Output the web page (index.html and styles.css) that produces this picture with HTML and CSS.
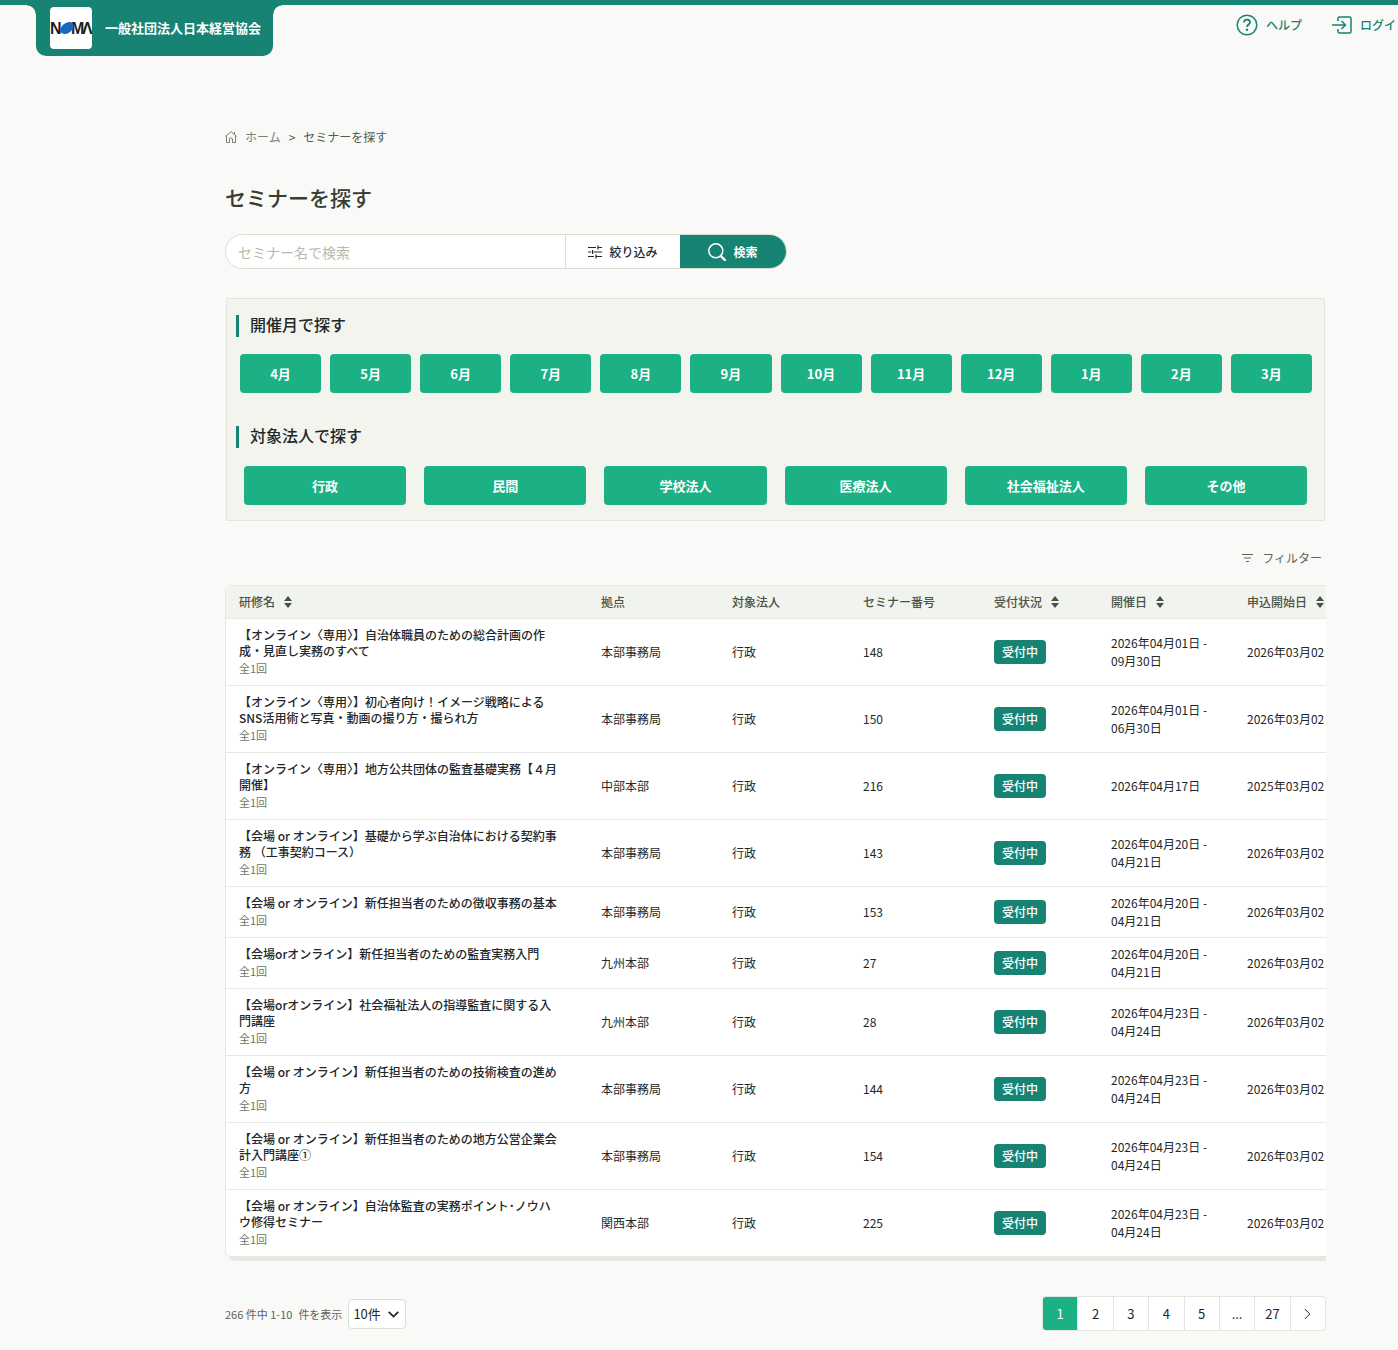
FILE: index.html
```html
<!DOCTYPE html>
<html lang="ja">
<head>
  <meta charset="UTF-8">
  <meta name="viewport" content="width=device-width, initial-scale=1.0">
  <title>セミナーを探す | 一般社団法人日本経営協会</title>
  <link rel="stylesheet" href="styles.css">
</head>
<body>
  <header class="site-header">
    <a class="brand" href="#">
      <svg class="brand-logo" viewBox="0 0 42 42" aria-hidden="true">
        <rect width="42" height="42" rx="4" fill="#fff"/>
        <g class="logo-text" fill="#1d1d1f">
          <text x="0" y="27">N</text>
          <text x="21" y="27">M</text>
          <text x="32" y="27">Λ</text>
        </g>
        <ellipse cx="17" cy="21" rx="7.500" ry="5" transform="rotate(-38 17 21)" fill="#1767c0"/>
      </svg>
      <span>一般社団法人日本経営協会</span>
    </a>
    <nav class="header-nav">
      <a href="#">
        <svg width="22" height="22" viewBox="0 0 22 22" fill="none" stroke="currentColor" stroke-width="1.500">
          <circle cx="11" cy="11" r="9.800"/>
          <path d="M8 8.600C8 6.700 9.300 5.600 11 5.600s3 1.100 3 2.700c0 2.200-3 2.300-3 4.700" stroke-width="1.800"/>
          <circle cx="11" cy="15.800" r="1.200" fill="currentColor" stroke="none"/>
        </svg>
        ヘルプ
      </a>
      <a href="#">
        <svg width="20" height="18" viewBox="0 0 20 18" fill="none" stroke="currentColor" stroke-width="1.500">
          <path d="M6 5V2.500Q6 1 7.500 1h10Q19 1 19 2.500v13q0 1.500-1.500 1.500h-10Q6 17 6 15.500V13"/>
          <path d="M0 9h13M9.500 5l4 4-4 4"/>
        </svg>
        ログイン
      </a>
    </nav>
  </header>

  <main class="content">
    <nav class="breadcrumb">
      <a href="#">
        <svg width="12" height="12" viewBox="0 0 12 12" fill="none" stroke="currentColor">
          <path d="M1.500 4.500V11.500h3V8q0-1 1.500-1t1.500 1v3.500h3V4.500M.5 5.300L6 .7l5.500 4.600M9.500 3.500V1"/>
        </svg>
        ホーム
      </a>
      <span>&gt;</span>
      <span>セミナーを探す</span>
    </nav>

    <h1>セミナーを探す</h1>

    <form class="search" onsubmit="return false">
      <input type="text" placeholder="セミナー名で検索" aria-label="セミナー名で検索">
      <button type="button" class="search-narrow">
        <svg width="14" height="14" viewBox="0 0 14 14" fill="none" stroke="currentColor" stroke-width="1.200">
          <path d="M0 2.500h8M10 2.500h4M10 .5v4M0 7h3M5.500 7H14M4.500 5v4M0 11.500h6M8.500 11.500H14M8 9.500v4"/>
        </svg>
        絞り込み
      </button>
      <button type="submit" class="search-submit">
        <svg width="18" height="18" viewBox="0 0 18 18" fill="none" stroke="currentColor">
          <circle cx="7.800" cy="7.800" r="7" stroke-width="1.500"/>
          <path d="M12.800 13l4.200 4.200" stroke-width="2.400" stroke-linecap="round"/>
        </svg>
        検索
      </button>
    </form>

    <section class="finder">
      <h2>開催月で探す</h2>
      <div class="months">
        <button type="button">4月</button>
        <button type="button">5月</button>
        <button type="button">6月</button>
        <button type="button">7月</button>
        <button type="button">8月</button>
        <button type="button">9月</button>
        <button type="button">10月</button>
        <button type="button">11月</button>
        <button type="button">12月</button>
        <button type="button">1月</button>
        <button type="button">2月</button>
        <button type="button">3月</button>
      </div>
      <h2>対象法人で探す</h2>
      <div class="targets">
        <button type="button">行政</button>
        <button type="button">民間</button>
        <button type="button">学校法人</button>
        <button type="button">医療法人</button>
        <button type="button">社会福祉法人</button>
        <button type="button">その他</button>
      </div>
    </section>

    <div class="toolbar">
      <button type="button">
        <svg width="11" height="8" viewBox="0 0 11 8" fill="none" stroke="currentColor">
          <path d="M0 .5h11M2 4h7M4 7.500h3"/>
        </svg>
        フィルター
      </button>
    </div>

    <div class="table-wrap">
      <table class="seminars">
        <colgroup>
          <col class="col-name">
          <col class="col-base">
          <col class="col-base">
          <col class="col-base">
          <col class="col-status">
          <col class="col-date">
          <col class="col-open">
        </colgroup>
        <thead>
          <tr>
            <th><button type="button" class="sort">研修名</button></th>
            <th>拠点</th>
            <th>対象法人</th>
            <th>セミナー番号</th>
            <th><button type="button" class="sort">受付状況</button></th>
            <th><button type="button" class="sort">開催日</button></th>
            <th><button type="button" class="sort">申込開始日</button></th>
          </tr>
        </thead>
        <tbody id="seminarList"></tbody>
      </table>
    </div>

    <div class="list-footer">
      <div class="count">
        <span>266 件中 1-10</span>
        <label for="perPage">件を表示</label>
        <span class="select-box">
          <select id="perPage">
            <option>10件</option>
            <option>20件</option>
            <option>50件</option>
          </select>
          <svg width="11" height="7" viewBox="0 0 11 7" fill="none" stroke="currentColor" stroke-width="1.800">
            <path d="M.7 .8l4.800 4.800L10.300 .8"/>
          </svg>
        </span>
      </div>
      <nav class="pager" aria-label="ページ">
        <a class="current" href="#">1</a>
        <a href="#">2</a>
        <a href="#">3</a>
        <a href="#">4</a>
        <a href="#">5</a>
        <span>...</span>
        <a href="#">27</a>
        <a href="#" aria-label="次へ">
          <svg width="7" height="12" viewBox="0 0 7 12" fill="none" stroke="currentColor">
            <path d="M.8 1l5 5-5 5"/>
          </svg>
        </a>
      </nav>
    </div>
  </main>

  <script src="script.js"></script>
</body>
</html>
```

FILE: styles.css
```css
* {
  box-sizing: border-box;
}
body {
  margin: 0;
  background: #f9f9f7;
  color: #22282a;
  font-family: "Noto Sans CJK JP", "Noto Sans", sans-serif;
  font-size: 12px;
  line-height: 18px;
  overflow-x: hidden;
}
a {
  color: inherit;
  text-decoration: none;
}
button, input, select {
  font: inherit;
  color: inherit;
  margin: 0;
  padding: 0;
  border: none;
  background: none;
}
button {
  cursor: pointer;
}
svg {
  flex: none;
}

/* header */
.site-header {
  display: flex;
  align-items: flex-start;
  justify-content: space-between;
  height: 56px;
  padding-left: 36px;
  border-top: 5px solid #178373;
  overflow: hidden;
}
.brand {
  position: relative;
  display: flex;
  align-items: center;
  gap: 13px;
  height: 51px;
  padding: 0 12px 6px 14px;
  border-radius: 0 0 10px 10px;
  background: #178373;
  color: #fff;
  font-size: 13px;
  font-weight: 700;
}
/* inverted corners where the tab meets the top bar */
.brand::before,
.brand::after {
  content: "";
  position: absolute;
  top: 0;
  width: 9px;
  height: 9px;
}
.brand::before {
  right: 100%;
  background: radial-gradient(circle at 0 100%, transparent 8px, #178373 9px);
}
.brand::after {
  left: 100%;
  background: radial-gradient(circle at 100% 100%, transparent 8px, #178373 9px);
}
.brand-logo {
  width: 42px;
  height: 42px;
}
.logo-text {
  font: bold 16px "Liberation Sans", sans-serif;
}
.header-nav {
  display: flex;
  gap: 30px;
  margin-right: -10px;
  padding-top: 9px;
  color: #178373;
  font-weight: 500;
  white-space: nowrap;
}
.header-nav a {
  display: flex;
  align-items: center;
  gap: 8px;
  height: 22px;
}

/* content */
.content {
  padding: 72px 72px 20px 225px;
}
.breadcrumb {
  display: flex;
  align-items: center;
  gap: 8px;
  color: #555b50;
}
.breadcrumb a {
  display: flex;
  align-items: center;
  gap: 8px;
  color: #7a8075;
}
h1 {
  margin: 35px 0 21px;
  color: #383d35;
  font-size: 21px;
  font-weight: 500;
  line-height: 32px;
}

/* search */
.search {
  display: flex;
  width: 562px;
  height: 35px;
  border: 1px solid #dadfd4;
  border-radius: 18px;
  background: #fff;
  overflow: hidden;
}
.search input {
  flex: 1;
  min-width: 0;
  padding: 0 12px;
  font-size: 14px;
}
.search input::placeholder {
  color: #b4bbae;
  opacity: 1;
}
.search button {
  display: flex;
  align-items: center;
  justify-content: center;
  gap: 7px;
  font-weight: 500;
}
.search-narrow {
  width: 115px;
  border-left: 1px solid #dadfd4;
}
.search .search-submit {
  width: 106px;
  background: #178373;
  color: #fff;
  font-weight: 700;
}

/* month / target buttons */
.finder {
  margin: 29px 1px 0;
  padding: 16px 9px 15px;
  border: 1px solid #e3e5df;
  background: #f3f4ee;
}
.finder h2 {
  margin: 0;
  padding: 0 0 4px 11px;
  border-left: 3px solid #178373;
  font-size: 16px;
  font-weight: 500;
  line-height: 18px;
}
.months,
.targets {
  display: grid;
}
.months {
  grid-template-columns: repeat(12, 1fr);
  gap: 9px;
  margin: 17px 3px 33px 4px;
}
.targets {
  grid-template-columns: repeat(6, 1fr);
  gap: 18px;
  margin: 18px 8px 0;
}
.finder button {
  height: 39px;
  border-radius: 4px;
  background: #1bb184;
  color: #fff;
  font-size: 13px;
  font-weight: 700;
}

.toolbar {
  display: flex;
  justify-content: flex-end;
  margin: 28px 4px 18px;
}
.toolbar button {
  display: flex;
  align-items: center;
  gap: 9px;
  color: #5e6459;
}

/* seminar table */
.table-wrap {
  padding-bottom: 5px;
  overflow: hidden;
}
.seminars {
  table-layout: fixed;
  width: 1280px;
  border: 1px solid #e6e9e2;
  border-radius: 6px;
  border-spacing: 0;
  background: #fff;
  box-shadow: 4px 4px 0 #e6e9e2;
}
.col-name { width: 362px; }
.col-base { width: 131px; }
.col-status { width: 117px; }
.col-date { width: 136px; }
.seminars th,
.seminars td {
  padding: 8px 0 8px 13px;
  border-bottom: 1px solid #e6e8e6;
  text-align: left;
}
.seminars th {
  padding: 7px 0 7px 13px;
  background: #f0f3ee;
  color: #4b5245;
  font-weight: 500;
}
.seminars th:first-child {
  border-top-left-radius: 5px;
}
.seminars tbody tr:last-child td {
  border-bottom: none;
}
.sort {
  display: flex;
  align-items: center;
  gap: 9px;
}
.sort::after {
  content: "";
  width: 8px;
  height: 12px;
  background: #4b5245;
  clip-path: polygon(50% 0, 100% 42%, 0 42%, 0 58%, 100% 58%, 50% 100%, 0 58%, 0 42%);
}
.seminar-title {
  display: block;
  max-width: 320px;
  font-weight: 500;
  line-height: 16px;
}
.seminar-times {
  display: block;
  color: #6d7568;
  font-size: 11px;
}
.seminars .date {
  padding-top: 0;
  padding-bottom: 0;
}
.seminars .date span {
  display: block;
  width: 104px;
}
.seminars .open {
  white-space: nowrap;
}
.status {
  display: inline-block;
  padding: 3px 8px;
  border-radius: 4px;
  background: #178373;
  color: #fff;
  font-weight: 500;
  vertical-align: middle;
}

/* list footer */
.list-footer {
  display: flex;
  align-items: center;
  justify-content: space-between;
  margin-top: 34px;
}
.count {
  display: flex;
  align-items: center;
  gap: 6px;
  color: #5e6459;
  font-size: 11px;
}
.select-box {
  position: relative;
  color: #22282a;
  font-size: 13px;
}
.select-box select {
  appearance: none;
  width: 58px;
  height: 30px;
  padding-left: 4px;
  border: 1px solid #dadfd4;
  border-radius: 4px;
  background: #fff;
}
.select-box svg {
  position: absolute;
  top: 12px;
  right: 7px;
  pointer-events: none;
}
.pager {
  display: flex;
  width: 284px;
  height: 35px;
  border: 1px solid #e3e5df;
  border-radius: 4px;
  background: #fff;
  font-size: 13px;
  overflow: hidden;
}
.pager > * {
  display: flex;
  flex: 1;
  align-items: center;
  justify-content: center;
}
.pager > * + * {
  border-left: 1px solid #e3e5df;
}
.pager .current {
  background: #1bb184;
  color: #fff;
}
```

FILE: script.js
```js
const seminars = [
  { title: "【オンライン〈専用〉】自治体職員のための総合計画の作成・見直し実務のすべて", base: "本部事務局", no: 148, date: "2026年04月01日 - 09月30日", open: "2026年03月02日" },
  { title: "【オンライン〈専用〉】初心者向け！イメージ戦略によるSNS活用術と写真・動画の撮り方・撮られ方", base: "本部事務局", no: 150, date: "2026年04月01日 - 06月30日", open: "2026年03月02日" },
  { title: "【オンライン〈専用〉】地方公共団体の監査基礎実務【４月開催】", base: "中部本部", no: 216, date: "2026年04月17日", open: "2025年03月02日" },
  { title: "【会場 or オンライン】基礎から学ぶ自治体における契約事務 （工事契約コース）", base: "本部事務局", no: 143, date: "2026年04月20日 - 04月21日", open: "2026年03月02日" },
  { title: "【会場 or オンライン】新任担当者のための徴収事務の基本", base: "本部事務局", no: 153, date: "2026年04月20日 - 04月21日", open: "2026年03月02日" },
  { title: "【会場orオンライン】新任担当者のための監査実務入門", base: "九州本部", no: 27, date: "2026年04月20日 - 04月21日", open: "2026年03月02日" },
  { title: "【会場orオンライン】社会福祉法人の指導監査に関する入門講座", base: "九州本部", no: 28, date: "2026年04月23日 - 04月24日", open: "2026年03月02日" },
  { title: "【会場 or オンライン】新任担当者のための技術検査の進め方", base: "本部事務局", no: 144, date: "2026年04月23日 - 04月24日", open: "2026年03月02日" },
  { title: "【会場 or オンライン】新任担当者のための地方公営企業会計入門講座①", base: "本部事務局", no: 154, date: "2026年04月23日 - 04月24日", open: "2026年03月02日" },
  { title: "【会場 or オンライン】自治体監査の実務ポイント･ノウハウ修得セミナー", base: "関西本部", no: 225, date: "2026年04月23日 - 04月24日", open: "2026年03月02日" }
];

const list = document.getElementById("seminarList");
seminars.forEach(s => {
  const tr = document.createElement("tr");
  tr.innerHTML = `
    <td><a class="seminar-title" href="#">${s.title}</a><span class="seminar-times">全1回</span></td>
    <td>${s.base}</td>
    <td>行政</td>
    <td>${s.no}</td>
    <td><span class="status">受付中</span></td>
    <td class="date"><span>${s.date}</span></td>
    <td class="open">${s.open}</td>`;
  list.appendChild(tr);
});
```
